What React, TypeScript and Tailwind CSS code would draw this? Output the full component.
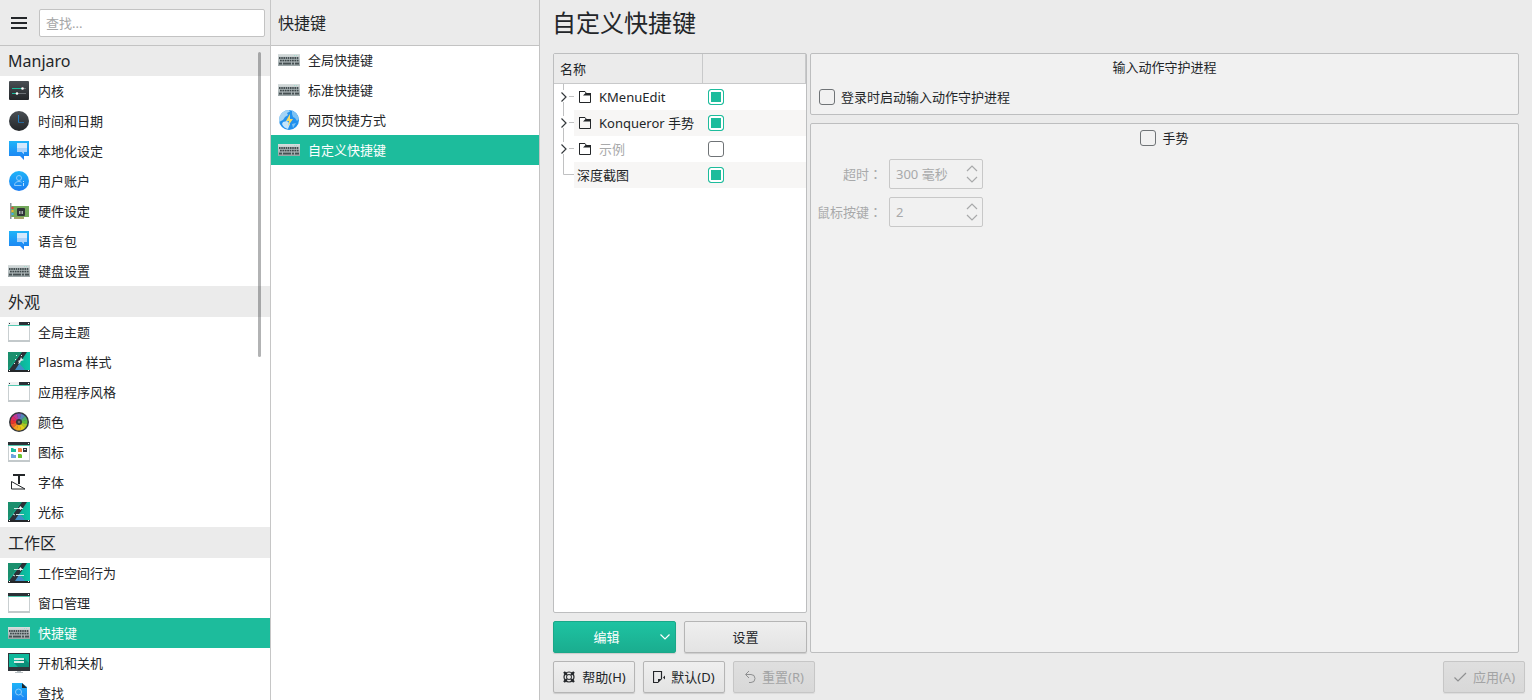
import React, { useState } from "react";

type IconName =
  | "kernel"
  | "clock"
  | "locale"
  | "user"
  | "hardware"
  | "keyboard"
  | "theme"
  | "plasma"
  | "colors"
  | "icons"
  | "fonts"
  | "cursor"
  | "window"
  | "power"
  | "search"
  | "globe";

interface Entry {
  label: string;
  icon: IconName;
}

interface Section {
  title: string;
  items: Entry[];
}

const sections: Section[] = [
  {
    title: "Manjaro",
    items: [
      { label: "内核", icon: "kernel" },
      { label: "时间和日期", icon: "clock" },
      { label: "本地化设定", icon: "locale" },
      { label: "用户账户", icon: "user" },
      { label: "硬件设定", icon: "hardware" },
      { label: "语言包", icon: "locale" },
      { label: "键盘设置", icon: "keyboard" },
    ],
  },
  {
    title: "外观",
    items: [
      { label: "全局主题", icon: "theme" },
      { label: "Plasma 样式", icon: "plasma" },
      { label: "应用程序风格", icon: "theme" },
      { label: "颜色", icon: "colors" },
      { label: "图标", icon: "icons" },
      { label: "字体", icon: "fonts" },
      { label: "光标", icon: "cursor" },
    ],
  },
  {
    title: "工作区",
    items: [
      { label: "工作空间行为", icon: "cursor" },
      { label: "窗口管理", icon: "window" },
      { label: "快捷键", icon: "keyboard" },
      { label: "开机和关机", icon: "power" },
      { label: "查找", icon: "search" },
    ],
  },
];

const subItems: Entry[] = [
  { label: "全局快捷键", icon: "keyboard" },
  { label: "标准快捷键", icon: "keyboard" },
  { label: "网页快捷方式", icon: "globe" },
  { label: "自定义快捷键", icon: "keyboard" },
];

const initialRows = [
  { name: "KMenuEdit", folder: true, enabled: true },
  { name: "Konqueror 手势", folder: true, enabled: true },
  { name: "示例", folder: true, enabled: false },
  { name: "深度截图", folder: false, enabled: true },
];

// clockwise, starting at the upper right
const wheel = [
  "#4fae6a", "#5dbb3a", "#a9c823", "#e0cf1c", "#f1b01c", "#f39c1f",
  "#f0602a", "#e6352f", "#e02a63", "#b93a96", "#7d55b8", "#5486b8",
];

function sector(i: number) {
  const a = ((i * 30 - 45) * Math.PI) / 180;
  const b = ((i * 30 - 13) * Math.PI) / 180;
  const p = (t: number) => `${11 + 8.5 * Math.cos(t)} ${11 + 8.5 * Math.sin(t)}`;
  return `M11 11L${p(a)}A8.5 8.5 0 0 1 ${p(b)}Z`;
}

function PlasmaArt({ cursor }: { cursor?: boolean }) {
  return (
    <>
      <rect y="1" width="22" height="20" fill="url(#teal)" />
      <path d="M0 1h14L0 17z" fill="#1a8f6d" />
      <path d="M11 12l6 7H6z" fill="#3f8fc6" />
      <path d="M14 1h5L7 19H1z" fill="#2b3036" />
      <rect y="19" width="22" height="2" fill="#232629" />
      <rect x="1" y="19" width="1" height="1" fill="#fff" />
      <rect x="20" y="19" width="1" height="1" fill="#fff" />
      {cursor ? (
        <>
          <path d="M6 7.5h9M8 13.5h8M5 13l2 1" stroke="#cfe9e5" fill="none" />
          <path d="M12.5 5l1.5 2-1.5 2-1.5-2z" fill="#f4fbfa" />
        </>
      ) : (
        <path
          d="M13 6l1 2 2 1-3 1-1 2-2 1 1-2-1-1 2-1zM8 4h1v1H8zM13 4h1v1h-1zM7 8h1v1H7zM6 12h1v1H6z"
          fill="#e6f3f1"
        />
      )}
    </>
  );
}

function WindowArt({ split }: { split?: boolean }) {
  return (
    <>
      <rect x=".5" y="1.5" width="21" height="19" fill="#fff" stroke="#c9cfd1" />
      <rect y="1" width="22" height="3" fill={split ? "#eff0f1" : "#2b3036"} />
      {split && <path d="M11 1h11v3H11z" fill="#2b3036" />}
      {split && <path d="M1 2h1v1H1z" fill="#2b3036" />}
      <rect x="20" y="2" width="1" height="1" fill="#fff" />
      <rect y="4" width="22" height="1" fill="#55c9b0" />
      <rect y="19" width="22" height="2" fill="#c3c9cb" />
    </>
  );
}

function Icon({ name }: { name: IconName }) {
  return (
    <svg width="22" height="22" viewBox="0 0 22 22" className="shrink-0" aria-hidden="true">
      <defs>
        <linearGradient id="dark" x2="0" y2="1">
          <stop stopColor="#4a4f54" />
          <stop offset="1" stopColor="#232629" />
        </linearGradient>
        <linearGradient id="blue" x2="0" y2="1">
          <stop stopColor="#1fb4f8" />
          <stop offset="1" stopColor="#1d7df2" />
        </linearGradient>
        <linearGradient id="teal">
          <stop stopColor="#15997b" />
          <stop offset="1" stopColor="#0ac5ab" />
        </linearGradient>
        <linearGradient id="keys" x2="0" y2="1">
          <stop stopColor="#d9dfdf" />
          <stop offset=".3" stopColor="#c3cbcc" />
          <stop offset="1" stopColor="#98a3a5" />
        </linearGradient>
      </defs>
      {name === "kernel" && (
        <>
          <rect x="1" y="1" width="20" height="19" rx="1" fill="url(#dark)" />
          <path d="M4 8.5h10" stroke="#1abc9c" />
          <path d="M15 8.5h3M9 13.5h9" stroke="#6c7276" />
          <path d="M4 13.5h5" stroke="#1abc9c" />
          <circle cx="14.5" cy="8.5" r="1.3" fill="#fff" />
          <circle cx="9" cy="13.5" r="1.3" fill="#fff" />
        </>
      )}
      {name === "clock" && (
        <>
          <circle cx="11" cy="11" r="10" fill="url(#dark)" />
          <path d="M10.5 5v7.5" stroke="#1d7fc4" fill="none" />
          <path d="M10 12.5h6" stroke="#2a6796" />
        </>
      )}
      {name === "locale" && (
        <>
          <path d="M1 1h20v15h-5v4l-4-4H1z" fill="url(#blue)" />
          <path d="M9 3h10v9h-3v2l-2-2H9z" fill="#d3e9fd" />
          <path d="M9 8h10v4h-3v2l-2-2H9z" fill="#a9d2fb" />
        </>
      )}
      {name === "user" && (
        <>
          <circle cx="11" cy="11" r="10" fill="url(#blue)" />
          <circle cx="11" cy="8" r="2.5" stroke="#8fcbfb" fill="none" />
          <path d="M13.5 15.5h-7c0-2.5 1.5-4 4.5-4 1.2 0 2 .3 2.5.8" stroke="#8fcbfb" fill="none" />
          <path d="M15 11h1v1h-1zM15 13h1v3h-1z" fill="#b9e0fd" />
        </>
      )}
      {name === "hardware" && (
        <>
          <rect x="3" y="6" width="18" height="11" fill="#74a85c" />
          <path d="M6 17h10v2H6z" fill="#a5a468" />
          <path d="M2 3h1.5v16H2z" fill="#8f989c" />
          <path d="M3.5 7h2v2h-2z" fill="#e8403a" />
          <path d="M3.5 10h2v2h-2z" fill="#f0b429" />
          <path d="M3.5 13h2v2h-2z" fill="#3daee9" />
          <rect x="9" y="8" width="8" height="8" rx="1" fill="#2f3438" />
          <path d="M11 11h1.5v3H11zM13.5 11H15v3h-1.5z" fill="#aab0b3" />
        </>
      )}
      {name === "keyboard" && (
        <>
          <rect y="5" width="22" height="12" fill="url(#keys)" />
          <path d="M16 6.5h4" stroke="#a3dccd" strokeDasharray="1 1" />
          <path d="M1 9h20" stroke="#465053" strokeWidth="2" strokeDasharray="1.6 .6" />
          <path d="M2 11.5h19" stroke="#3f494c" strokeWidth="2" strokeDasharray="1.8 .6" />
          <path d="M1 14.5h3m1 0h8m1 0h2m1 0h4" stroke="#465053" strokeWidth="2" />
          <path d="M1 10.5h20M1 13h20" stroke="#a9b3b5" strokeWidth=".5" />
        </>
      )}
      {name === "theme" && <WindowArt split />}
      {name === "window" && <WindowArt />}
      {name === "plasma" && <PlasmaArt />}
      {name === "cursor" && <PlasmaArt cursor />}
      {name === "colors" && (
        <>
          <circle cx="11" cy="11" r="10" fill="#31363b" />
          {wheel.map((c, i) => (
            <path key={c} d={sector(i)} fill={c} />
          ))}
          <circle cx="11" cy="11" r="3" fill="#31363b" />
          <circle cx="11" cy="11" r="1.3" fill="#6b7277" />
        </>
      )}
      {name === "icons" && (
        <>
          <WindowArt />
          <path d="M3 7h2l1 1h2v3H3z" fill="#1abc9c" />
          <path d="M10 7h3l1 1v3h-4z" fill="#f67b42" />
          <path d="M15 7h4v4h-4z" fill="#31363b" />
          <path d="M16 8h2v1h-2z" fill="#d9dddf" />
          <path d="M3 13h2l1 1h2v3H3z" fill="#6fa3dd" />
          <path d="M10 13h3l1 1v3h-4z" fill="#6cc52f" />
        </>
      )}
      {name === "fonts" && (
        <>
          <path d="M5 4h12M11 4v9" stroke="#232629" strokeWidth="2" fill="none" />
          <path d="M3.5 10.5v7.5H17z" stroke="#232629" fill="none" />
        </>
      )}
      {name === "power" && (
        <>
          <rect y="1" width="22" height="18" fill="#31363b" />
          <rect x="1" y="2" width="20" height="13" fill="#0fb89b" />
          <path d="M16 6l5 5v4H10l-4-4z" fill="#0b8f7a" />
          <path d="M6 6h10v2H6zM6 9h10v2H6z" fill="#dcebe8" />
          <path d="M9 19h4v1h2v1H7v-1h2z" fill="#b9c0c3" />
        </>
      )}
      {name === "search" && (
        <>
          <path d="M4 1h10l5 4v16H4z" fill="url(#blue)" />
          <path d="M14 1l5 5h-5z" fill="#232629" />
          <circle cx="10.5" cy="10" r="3" stroke="#8fcbfb" fill="none" />
          <path d="M12.5 12l3 3" stroke="#8fcbfb" />
        </>
      )}
      {name === "globe" && (
        <>
          <circle cx="11" cy="11" r="10" fill="#2191ee" />
          <path d="M2 6.5C4 3 7 1 11 1l1 1.5L9 4l1 2-3 2-2 3-4 2c0-3 0-4.5 1-6.500z" fill="#a4d4f6" />
          <path d="M14 1.5c4 1.5 6 4.5 7 8.5l-2 2-2-3-2-1-1-3z" fill="#7cc2f5" />
          <path d="M5 13l4-1 3 3-2 5c-3-.5-5-2.5-6-5z" fill="#c5e5fb" />
          <path d="M14 15l4-1-3 5z" fill="#7cc2f5" />
          <path d="M12 5l-4 7h3l-1 5 5-7h-3z" fill="#f5d968" />
        </>
      )}
    </svg>
  );
}

interface NavItemProps {
  entry: Entry;
  active: boolean;
  onClick: () => void;
}

function NavItem({ entry, active, onClick }: NavItemProps) {
  return (
    <li>
      <button
        type="button"
        onClick={onClick}
        className={`flex h-[30px] w-full items-center gap-2 pl-2 text-left in-[.sub]:pl-[7px] ${active ? "bg-[#1dbc9c] text-white" : ""}`}
      >
        <Icon name={entry.icon} />
        <span>{entry.label}</span>
      </button>
    </li>
  );
}

function Check(props: React.InputHTMLAttributes<HTMLInputElement>) {
  return (
    <input
      type="checkbox"
      className="block size-4 shrink-0 appearance-none rounded-[3px] border border-[#6f7376] checked:border-[#1dbc9c] checked:bg-[#1dbc9c] checked:shadow-[inset_0_0_0_2px_#fff]"
      {...props}
    />
  );
}

function SpinField({ id, label, value }: { id: string; label: string; value: string }) {
  return (
    <>
      <label htmlFor={id} className="text-right whitespace-nowrap">
        {label}
        {/* TC face centres the full-width colon in its cell */}
        <span className="font-['Noto_Sans_CJK_TC',sans-serif] leading-none">：</span>
      </label>
      <div className="flex h-[30px] w-[94px] items-center rounded-[2px] border border-[#c8c8c8] pr-1">
        <input id={id} defaultValue={value} disabled className="w-0 flex-1 bg-transparent pl-1.5 text-[#a8a9aa]" />
        <svg width="12" height="18" viewBox="0 0 12 18" fill="none" stroke="#a8a9aa" aria-hidden="true">
          <path d="M1 6l5-5 5 5M1 12l5 5 5-5" strokeWidth="1.2" />
        </svg>
      </div>
    </>
  );
}

function Branch({ last }: { last: boolean }) {
  return (
    <svg width="20" height="26" viewBox="0 0 20 26" fill="none" className="shrink-0" aria-hidden="true">
      <path d={last ? "M9.5 0v12.5H20" : "M9.5 0v6M9.5 18v8M15 12.5h5"} stroke="#c0c1c2" />
      {!last && <path d="M7.5 8.5L12 13l-4.5 4.5" stroke="#33383c" strokeWidth="1.2" />}
    </svg>
  );
}

const buttonClass =
  "flex h-8 items-center justify-center rounded-[2px] border border-[#b5b5b5] bg-linear-to-b from-[#efefef] to-[#e3e3e3] shadow-[0_1px_1px_#00000022]";
const disabledClass =
  "flex h-8 items-center justify-center rounded-[2px] border border-[#c6c6c6] bg-linear-to-b from-[#dfdfdf] to-[#d8d8d8] text-[#a3a4a5] shadow-[0_1px_1px_#00000011]";

export default function App() {
  const [section, setSection] = useState("快捷键");
  const [page, setPage] = useState("自定义快捷键");
  const [rows, setRows] = useState(initialRows);

  const toggleRow = (name: string) => {
    setRows((prev) => prev.map((r) => (r.name === name ? { ...r, enabled: !r.enabled } : r)));
  };

  return (
    <div className="flex h-screen overflow-hidden bg-[#ebebeb] font-['Noto_Sans','Noto_Sans_CJK_SC',sans-serif] text-[13px] leading-5 text-[#232629]">
      <aside className="relative flex w-[271px] shrink-0 flex-col border-r border-[#c6c6c6]">
        <div className="flex h-[46px] shrink-0 items-center gap-[9px] border-b border-[#c3c3c3] pr-[5px] pl-2">
          <button type="button" aria-label="菜单">
            <svg width="22" height="22" viewBox="0 0 22 22" stroke="#232629" strokeWidth="2">
              <path d="M3 6h16M3 11h16M3 16h16" />
            </svg>
          </button>
          <input
            type="search"
            aria-label="查找"
            placeholder="查找..."
            className="h-7 w-0 flex-1 rounded-[2px] border border-[#c3c3c3] bg-white px-1.5 placeholder:text-[#a5a6a7]"
          />
        </div>
        <nav className="flex-1 overflow-y-auto bg-white [scrollbar-width:none]">
          {sections.map((s, i) => (
            <section key={s.title}>
              <h2 className={`flex items-center bg-[#ebebeb] px-2 text-base ${i === 0 ? "h-[30px]" : "h-[31px]"}`}>
                {s.title}
              </h2>
              <ul>
                {s.items.map((item) => (
                  <NavItem
                    key={item.label}
                    entry={item}
                    active={item.label === section}
                    onClick={() => setSection(item.label)}
                  />
                ))}
              </ul>
            </section>
          ))}
        </nav>
        {/* overlay scrollbar handle */}
        <div className="absolute top-[52px] right-[9px] h-[305px] w-[3px] rounded-full bg-[#232629]/35" />
      </aside>

      <nav className="sub flex w-[269px] shrink-0 flex-col border-r border-[#c3c3c3] bg-white">
        <h2 className="flex h-[46px] shrink-0 items-center border-b border-[#c3c3c3] bg-[#ebebeb] px-[7px] text-base">
          快捷键
        </h2>
        <ul className="-mt-px">
          {subItems.map((item) => (
            <NavItem key={item.label} entry={item} active={item.label === page} onClick={() => setPage(item.label)} />
          ))}
        </ul>
      </nav>

      <main className="flex min-w-0 flex-1 flex-col pb-[7px]">
        <h1 className="h-[53px] shrink-0 px-3 text-2xl leading-[46px]">自定义快捷键</h1>

        <div className="flex min-h-0 flex-1 gap-[3px] px-[13px]">
          <div className="flex w-[254px] shrink-0 flex-col gap-2">
            <div className="flex-1 rounded-[2px] border border-[#bdbebf] bg-white">
              <table className="w-full table-fixed border-separate border-spacing-0">
                <thead>
                  <tr className="h-[30px] bg-[#ebebeb] text-left">
                    <th className="w-[149px] border-r border-b border-[#c8c9ca] p-0 pl-1.5 font-normal">名称</th>
                    <th className="border-r border-b border-[#c8c9ca] p-0" aria-label="启用" />
                  </tr>
                </thead>
                <tbody>
                  {rows.map((row, i) => (
                    <tr key={row.name}>
                      <td className="p-0">
                        <div className="flex h-[26px]">
                          <Branch last={i === rows.length - 1} />
                          <div
                            className={`flex flex-1 items-center gap-2 whitespace-nowrap ${i % 2 ? "bg-[#f7f6f5]" : ""} ${row.folder ? "pl-[5px]" : "pl-[3px]"} ${row.enabled ? "" : "text-[#a8a9aa]"}`}
                          >
                            {row.folder && (
                              <svg width="12" height="12" viewBox="0 0 12 12" fill="none" aria-hidden="true">
                                <path d="M.5 0v11.5h11V3M0 .5h6l1.5 2" stroke="#232629" />
                                <path d="M1 4.5h3L6.5 2H12v2.5H6" fill="#232629" />
                                <path d="M1 3h3l1.5-1.5H1z" fill="#fff" />
                              </svg>
                            )}
                            <span>{row.name}</span>
                          </div>
                        </div>
                      </td>
                      <td className={`p-0 pl-[5px] ${i % 2 ? "bg-[#f7f6f5]" : ""}`}>
                        <Check aria-label={row.name} checked={row.enabled} onChange={() => toggleRow(row.name)} />
                      </td>
                    </tr>
                  ))}
                </tbody>
              </table>
            </div>
            <div className="grid shrink-0 grid-cols-2 gap-2">
              <button
                type="button"
                className="flex h-8 items-center rounded-[2px] border border-[#1aa889] bg-linear-to-b from-[#1ec3a2] to-[#1aad8f] pr-1 text-white shadow-[0_1px_1px_#00000022]"
              >
                <span className="flex-1">编辑</span>
                <svg width="12" height="12" viewBox="0 0 12 12" fill="none" stroke="#fff" aria-hidden="true">
                  <path d="M1.5 3.5L6 8l4.5-4.5" strokeWidth="1.2" />
                </svg>
              </button>
              <button type="button" className={buttonClass}>
                设置
              </button>
            </div>
          </div>

          <div className="flex min-w-0 flex-1 flex-col gap-2">
            <fieldset className="flex h-[62px] shrink-0 flex-col rounded-[2px] border border-[#bdbebf] bg-[#f1f1f1] px-2 pt-[3px]">
              <div className="text-center">输入动作守护进程</div>
              <label className="mt-2.5 flex items-center gap-1.5">
                <Check />
                登录时启动输入动作守护进程
              </label>
            </fieldset>
            <fieldset className="flex-1 rounded-[2px] border border-[#bdbebf] bg-[#f1f1f1] px-1.5 pt-1">
              <label className="flex items-center justify-center gap-1.5">
                <Check />
                手势
              </label>
              <div className="mt-[11px] grid grid-cols-[65px_1fr] items-center gap-x-[7px] gap-y-2 text-[#a8a9aa]">
                <SpinField id="timeout" label="超时" value="300 毫秒" />
                <SpinField id="mouse-button" label="鼠标按键" value="2" />
              </div>
            </fieldset>
          </div>
        </div>

        <div className="mt-2 flex shrink-0 gap-2 pr-[7px] pl-[13px]">
          <button type="button" className={`w-[82px] gap-1.5 ${buttonClass}`}>
            <svg width="14" height="14" viewBox="0 0 14 14" fill="none" stroke="#232629" aria-hidden="true">
              <circle cx="7" cy="7" r="5" strokeWidth="1.2" />
              <circle cx="7" cy="7" r="2.5" />
              <path d="M2 2l3 3M12 2L9 5M2 12l3-3M12 12L9 9" strokeWidth="2.4" />
            </svg>
            帮助(H)
          </button>
          <button type="button" className={`w-[82px] gap-1.5 ${buttonClass}`}>
            <svg width="12" height="14" viewBox="0 0 12 14" fill="none" stroke="#232629" aria-hidden="true">
              <path d="M5 12.5H.5v-11h8V9" strokeWidth="1.2" />
              <path d="M5 13V9h4z" fill="#232629" stroke="none" />
              <path d="M12 5.5v4l-2-2z" fill="#232629" stroke="none" />
            </svg>
            默认(D)
          </button>
          <button type="button" disabled className={`w-[82px] gap-1.5 ${disabledClass}`}>
            <svg width="12" height="14" viewBox="0 0 12 14" fill="none" stroke="#8f9091" aria-hidden="true">
              <path d="M5 1L1.5 4.5 5 8M2 4.5h5a4 4 0 0 1 0 8H5" />
            </svg>
            重置(R)
          </button>
          <button type="button" disabled className={`ml-auto w-[82px] gap-1.5 ${disabledClass}`}>
            <svg width="14" height="14" viewBox="0 0 14 14" fill="none" stroke="#8f9091" aria-hidden="true">
              <path d="M1.5 7.5L5 11l8-8" strokeWidth="1.2" />
            </svg>
            应用(A)
          </button>
        </div>
      </main>
    </div>
  );
}
